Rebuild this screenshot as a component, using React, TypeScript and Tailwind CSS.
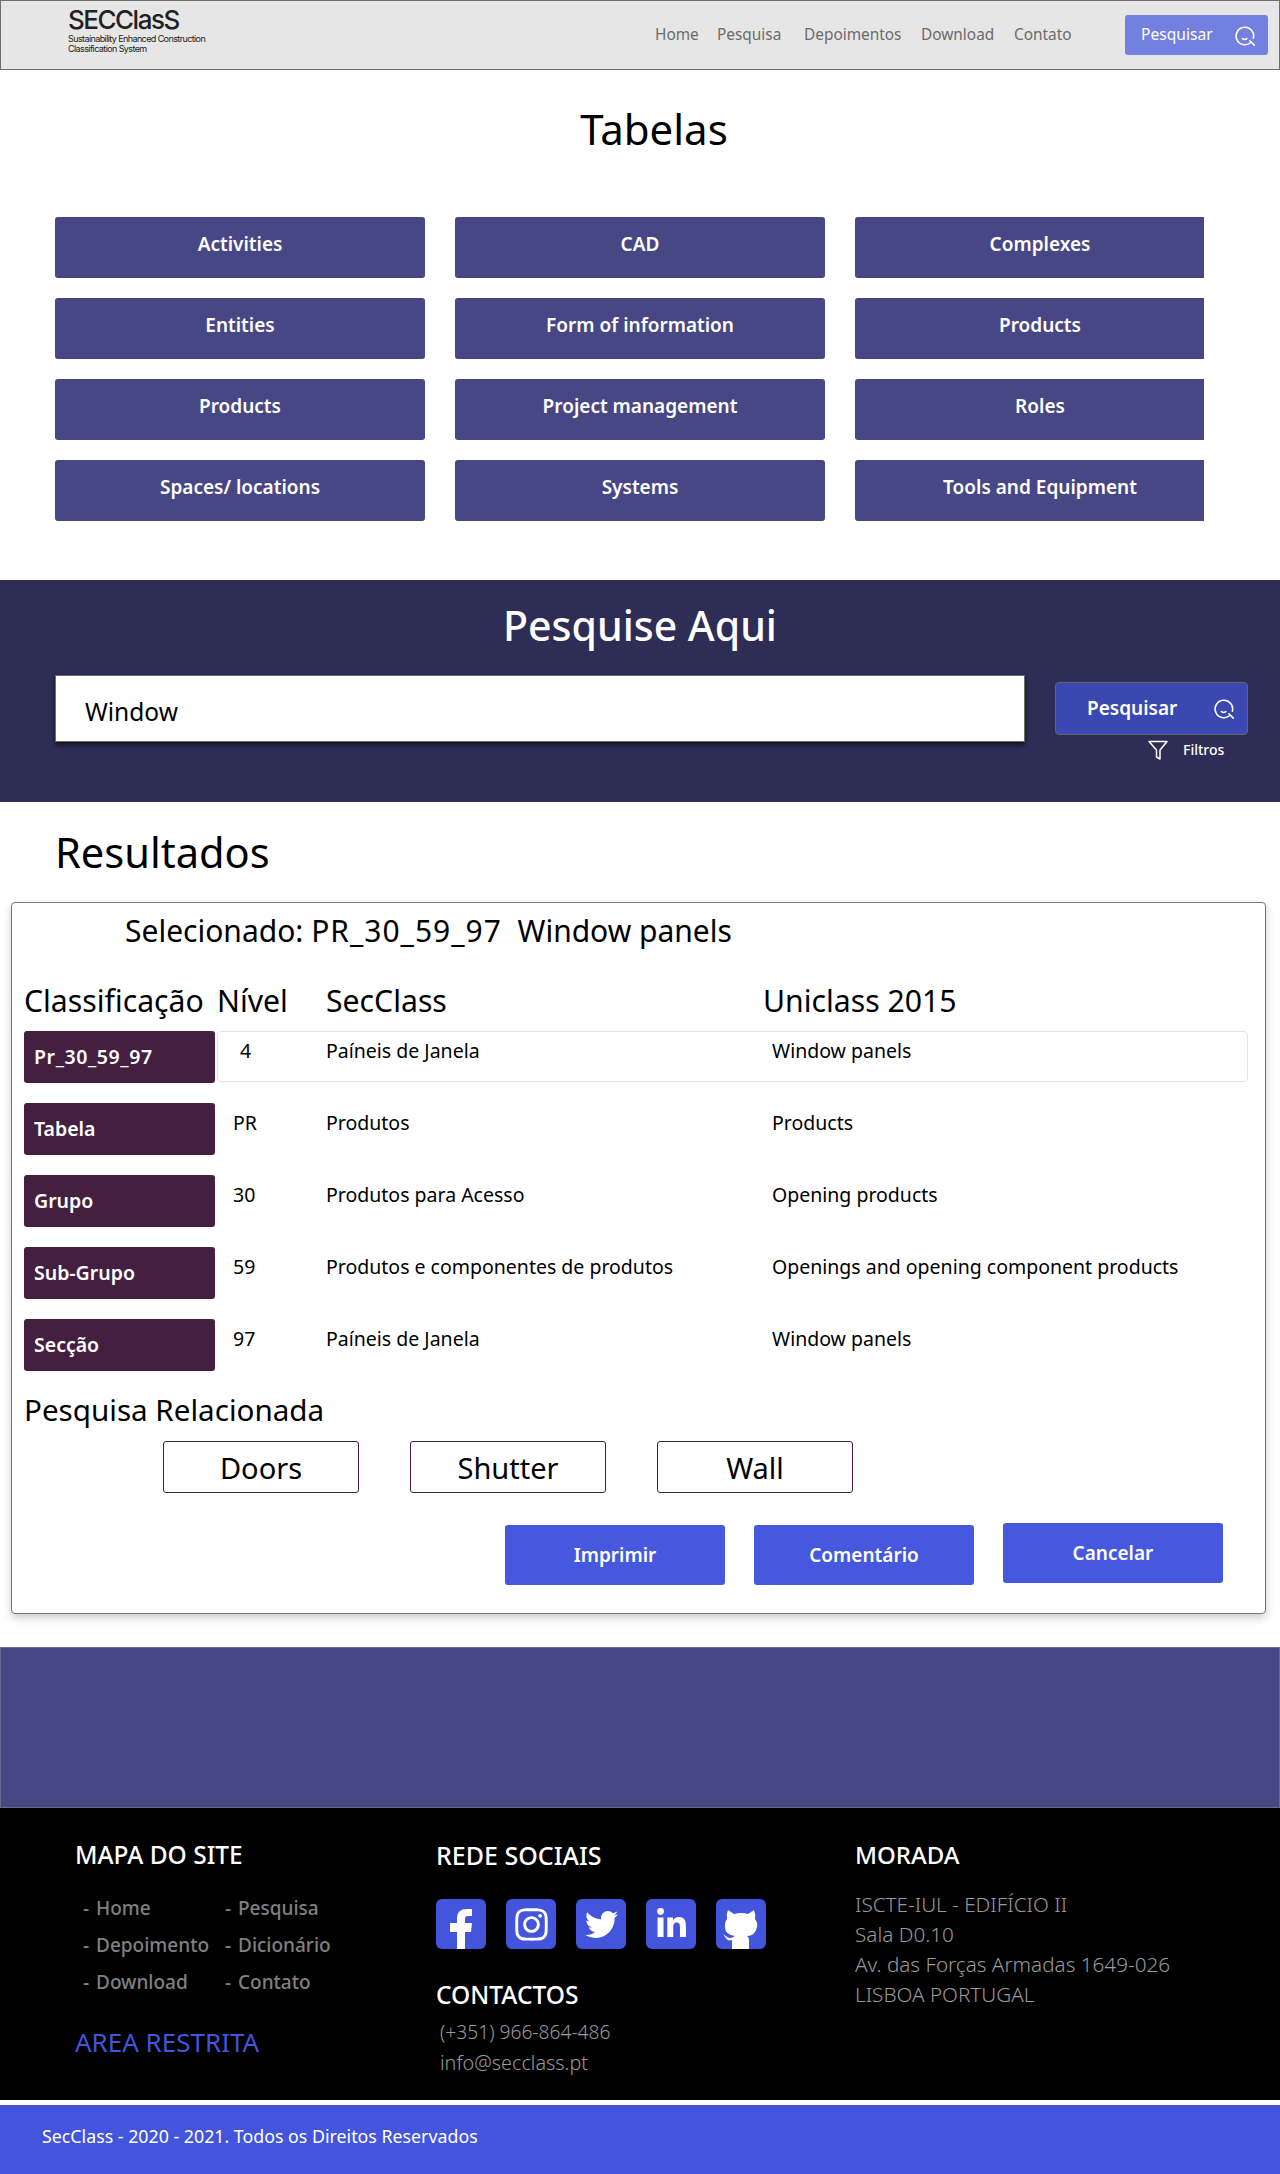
import { FaInstagram, FaLinkedinIn, FaTwitter } from "react-icons/fa";

const SearchIcon = ({ className }: { className: string }) => (
  <svg viewBox="0 0 24 24" fill="none" stroke="currentColor" strokeWidth="1.8" strokeLinecap="round" className={className}>
    <path d="M18 20a10 10 0 1 1 3-5" />
    <path d="M8.5 15.5c1.6 1.2 3.6 1.2 5 0" />
    <path d="M17 18l5 5" />
  </svg>
);

const FilterIcon = () => (
  <svg viewBox="0 0 20 20" fill="none" stroke="currentColor" strokeWidth="1.5" strokeLinejoin="round" className="h-[20px] w-[20px] text-white">
    <path d="M1 1.5h18L12 10v9l-3.5-2v-7z" />
  </svg>
);

const FacebookMark = () => (
  <svg viewBox="0 0 50 50" fill="currentColor" className="h-[50px] w-[50px]">
    <path d="M21 50V33H14V24H21V19Q21 10 31 10H36V17H32Q29 17 29 20V24H36L35 33H29V50Z" />
  </svg>
);

const GithubMark = () => (
  <svg viewBox="0 0 50 50" fill="currentColor" className="h-[50px] w-[50px]">
    <path d="M12 11L18 15Q25 13 32 15L38 11Q40 16 39 20Q42 24 41 28Q39 37 31 37Q33 38 33 41V50H16V41Q13 42 11 40.500Q9 38 7 35Q10 37 12 38.500Q14 39.500 17.500 38Q17.500 37.500 19 37Q9 36 9 28Q8.500 23 11 20Q10 15 12 11Z" />
  </svg>
);

const tabelas = [
  "Activities",
  "CAD",
  "Complexes",
  "Entities",
  "Form of information",
  "Products",
  "Products",
  "Project management",
  "Roles",
  "Spaces/ locations",
  "Systems",
  "Tools and Equipment",
];

const linhas = [
  { tag: "Tabela", nivel: "PR", sec: "Produtos", uni: "Products" },
  { tag: "Grupo", nivel: "30", sec: "Produtos para Acesso", uni: "Opening products" },
  { tag: "Sub-Grupo", nivel: "59", sec: "Produtos e componentes de produtos", uni: "Openings and opening component products" },
  { tag: "Secção", nivel: "97", sec: "Paíneis de Janela", uni: "Window panels" },
];

const mapa = ["Home", "Pesquisa", "Depoimento", "Dicionário", "Download", "Contato"];

const social = [
  { icon: <FacebookMark />, name: "facebook" },
  { icon: <FaInstagram className="h-[37px] w-[37px]" />, name: "instagram" },
  { icon: <FaTwitter className="h-[33px] w-[33px]" />, name: "twitter" },
  { icon: <FaLinkedinIn className="h-[33px] w-[33px]" />, name: "linkedin" },
  { icon: <GithubMark />, name: "github" },
];

export default function App() {
  return (
    <div className="h-[2174px] w-[1280px] overflow-hidden bg-white font-['Noto_Sans',sans-serif] text-black">
      {/* Navbar */}
      <header className="flex h-[70px] items-center border border-[#6f6f6f] bg-[#e6e6e6] pl-[67px]">
        <div className="w-[587px] pb-[8px] font-['Inter',sans-serif] text-[#222]">
          <div className="text-[26px] font-medium leading-[24px] tracking-[-1.5px]">SECClasS</div>
          <div className="mt-[2px] text-[9px] leading-[10px] tracking-[-0.6px]">
            Sustainability Enhanced Construction
            <br />
            Classification System
          </div>
        </div>
        <nav className="flex text-[15.4px] text-[#6b6b6b]">
          <span className="w-[62px]">Home</span>
          <span className="w-[87px]">Pesquisa</span>
          <span className="w-[117px]">Depoimentos</span>
          <span className="w-[93px]">Download</span>
          <span className="w-[111px]">Contato</span>
        </nav>
        <button className="flex h-[40px] w-[143px] items-center rounded-[3px] bg-[#7480e0] pl-[16px] text-[15.6px] text-white">
          Pesquisar
          <SearchIcon className="ml-auto mr-[12px] h-[21px] w-[21px]" />
        </button>
      </header>

      {/* Tabelas */}
      <section className="h-[510px] pt-[35px]">
        <h1 className="pl-[28px] text-center text-[42px] leading-[48px]">Tabelas</h1>
        <div className="ml-[55px] mt-[64px] w-[1149px] overflow-hidden">
          <div className="grid w-[1170px] grid-cols-[repeat(3,370px)] gap-x-[30px] gap-y-[20px]">
            {tabelas.map((t, i) => (
              <div key={i} className="h-[61px] rounded-[3px] bg-[#484785] pt-[13px] text-center text-[19px] font-semibold leading-[28px] text-white">
                {t}
              </div>
            ))}
          </div>
        </div>
      </section>

      {/* Pesquise Aqui */}
      <section className="h-[222px] bg-[#2e2d55] pt-[21px]">
        <h2 className="text-center text-[41px] font-medium leading-[48px] text-white">Pesquise Aqui</h2>
        <div className="ml-[55px] mt-[26px] flex items-start">
          <div className="flex h-[67px] w-[970px] items-center border border-[#6b6b6b] bg-white pl-[29px] pt-[7px] text-[24.500px] shadow-[0_3px_5px_rgba(0,0,0,0.6)]">
            Window
          </div>
          <div className="ml-[30px] mt-[7px] w-[193px]">
            <button className="flex h-[53px] w-full items-center rounded-[4px] border border-[#666] bg-[#3c48b2] pl-[31px] text-[19px] font-semibold text-white">
              Pesquisar
              <SearchIcon className="ml-auto mr-[12px] h-[21px] w-[21px]" />
            </button>
            <div className="mt-[4px] flex items-center pl-[93px] text-[14px] font-medium text-white">
              <FilterIcon />
              <span className="ml-[15px]">Filtros</span>
            </div>
          </div>
        </div>
      </section>

      {/* Resultados */}
      <section className="pt-[26px]">
        <h2 className="pl-[55px] text-[41.600px] leading-[48px]">Resultados</h2>
        <div className="ml-[11px] mt-[26px] h-[712px] w-[1255px] rounded-[4px] border border-[#777] bg-white pl-[12px] pt-[10px] shadow-[0_4px_8px_rgba(0,0,0,0.2)]">
          <p className="pl-[101px] text-[30px] leading-[36px] whitespace-pre">
            Selecionado: <span className="tracking-[1px]">PR_30_59_97</span>  Window panels
          </p>
          <div className="mt-[34px] grid grid-cols-[193px_109px_437px_1fr] text-[30.200px] leading-[36px]">
            <span>Classificação</span>
            <span>Nível</span>
            <span>SecClass</span>
            <span>Uniclass 2015</span>
          </div>
          <div className="mt-[12px] flex h-[52px]">
            <div className="flex h-[52px] w-[191px] items-center rounded-[3px] bg-[#451f3f] pl-[10px] text-[19.500px] font-semibold tracking-[0.6px] text-white">Pr_30_59_97</div>
            <div className="ml-[2px] grid h-[51px] w-[1031px] grid-cols-[108px_446px_1fr] rounded-[4px] border border-[#e3e3e3] pt-[7px] text-[19.500px] leading-[24px]">
              <span className="pl-[22px]">4</span>
              <span>Paíneis de Janela</span>
              <span>Window panels</span>
            </div>
          </div>
          {linhas.map((l) => (
            <div key={l.tag} className="mt-[20px] flex h-[52px]">
              <div className="flex h-[52px] w-[191px] items-center rounded-[3px] bg-[#451f3f] pl-[10px] text-[19.500px] font-semibold text-white">{l.tag}</div>
              <div className="ml-[2px] grid w-[1031px] grid-cols-[109px_446px_1fr] pt-[8px] text-[19.500px] leading-[24px]">
                <span className="pl-[16px]">{l.nivel}</span>
                <span>{l.sec}</span>
                <span>{l.uni}</span>
              </div>
            </div>
          ))}
          <h3 className="mt-[21px] text-[29.600px] leading-[36px]">Pesquisa Relacionada</h3>
          <div className="ml-[139px] mt-[13px] flex gap-x-[51px]">
            {["Doors", "Shutter", "Wall"].map((r) => (
              <div key={r} className="flex h-[52px] w-[196px] items-center justify-center rounded-[3px] border border-[#451f3f] pt-[2px] text-[29px]">
                {r}
              </div>
            ))}
          </div>
          <div className="ml-[481px] mt-[30px] flex items-start gap-x-[29px] text-[19px] font-semibold text-white">
            <button className="mt-[2px] h-[60px] w-[220px] rounded-[3px] bg-[#4558de]">Imprimir</button>
            <button className="mt-[2px] h-[60px] w-[220px] rounded-[3px] bg-[#4558de]">Comentário</button>
            <button className="h-[60px] w-[220px] rounded-[3px] bg-[#4558de]">Cancelar</button>
          </div>
        </div>
      </section>

      <div className="mt-[33px] h-[161px] border border-[#6b6b8f] bg-[#484785]" />

      {/* Footer */}
      <footer className="flex h-[292px] bg-black pl-[75px] pt-[32px] text-[#808080]">
        <div className="w-[361px]">
          <h4 className="text-[24.500px] font-medium leading-[30px] text-white">MAPA DO SITE</h4>
          <ul className="mt-[26px] grid w-[290px] grid-cols-[142px_1fr] gap-y-[13px] pl-[8px] text-[19px] font-medium leading-[24px]">
            {mapa.map((m) => (
              <li key={m} className="flex">
                <span className="w-[13px]">-</span>
                {m}
              </li>
            ))}
          </ul>
          <p className="mt-[33px] text-[26px] leading-[30px] text-[#4355dc]">AREA RESTRITA</p>
        </div>
        <div className="w-[419px]">
          <h4 className="text-[25px] font-medium leading-[30px] text-white">REDE SOCIAIS</h4>
          <div className="mt-[29px] flex gap-x-[20px]">
            {social.map((s) => (
              <div key={s.name} className="flex h-[50px] w-[50px] items-center justify-center overflow-hidden rounded-[6px] bg-[#4355dc] text-white">
                {s.icon}
              </div>
            ))}
          </div>
          <h4 className="mt-[31px] text-[24.500px] font-medium leading-[30px] text-white">CONTACTOS</h4>
          <p className="mt-[10px] pl-[4px] text-[19.200px] leading-[24px] font-light text-[#999]">(+351) 966-864-486</p>
          <p className="mt-[7px] pl-[4px] text-[19.800px] leading-[24px] font-light text-[#999]">info@secclass.pt</p>
        </div>
        <div>
          <h4 className="text-[24px] font-medium leading-[30px] text-white">MORADA</h4>
          <div className="mt-[19px] text-[20.700px] font-light leading-[30px] text-[#999]">
            <p>ISCTE-IUL - EDIFÍCIO II</p>
            <p>Sala D0.10</p>
            <p>Av. das Forças Armadas 1649-026</p>
            <p>LISBOA PORTUGAL</p>
          </div>
        </div>
      </footer>

      <div className="mt-[5px] h-[69px] bg-[#4355dc] pl-[42px] pt-[19px] text-[17.800px] leading-[24px] text-white">
        SecClass - 2020 - 2021. Todos os Direitos Reservados
      </div>
    </div>
  );
}
